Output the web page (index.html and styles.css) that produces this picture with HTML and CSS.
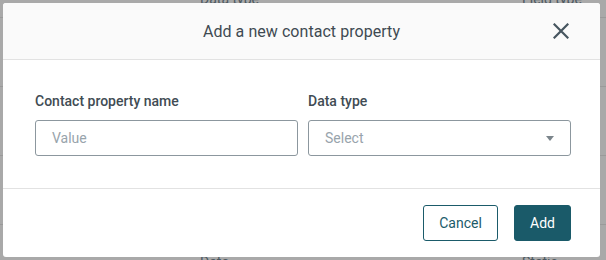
FILE: index.html
```html
<!DOCTYPE html>
<html lang="en">
<head>
<meta charset="utf-8">
<title>Add a new contact property</title>
<link rel="stylesheet" href="styles.css">
</head>
<body>
<div class="page">
  <div class="bg-table">
    <div class="bg-row bg-row-top"><span class="bg-c1">Data type</span><span class="bg-c2">Field type</span></div>
    <div class="bg-row"></div>
    <div class="bg-row"></div>
    <div class="bg-row"></div>
    <div class="bg-row bg-row-last"><span class="bg-c1">Date</span><span class="bg-c2">Static</span></div>
  </div>

  <div class="modal">
    <div class="modal-header">
      <h2 class="modal-title">Add a new contact property</h2>
      <button class="close-btn" aria-label="Close">
        <svg width="16" height="16" viewBox="0 0 16 16"><path d="M1.5 1.5 L14.5 14.5 M14.5 1.5 L1.5 14.5" stroke="#46555f" stroke-width="2.2" stroke-linecap="square" fill="none"/></svg>
      </button>
    </div>
    <div class="modal-body">
      <div class="field">
        <label class="field-label">Contact property name</label>
        <div class="input"><span class="placeholder">Value</span></div>
      </div>
      <div class="field">
        <label class="field-label">Data type</label>
        <div class="input select"><span class="placeholder">Select</span><span class="caret"></span></div>
      </div>
    </div>
    <div class="modal-footer">
      <button class="btn btn-outline">Cancel</button>
      <button class="btn btn-primary">Add</button>
    </div>
  </div>
</div>
</body>
</html>
```
FILE: styles.css
```css
* { box-sizing: border-box; }
html, body { margin: 0; padding: 0; }
body {
  background: #a9a9a9;
  font-family: Roboto, "Liberation Sans", Arial, sans-serif;
  width: 606px;
  height: 260px;
  overflow: hidden;
}
.page { position: relative; width: 606px; height: 260px; overflow: hidden; }

.bg-table { display: flex; flex-direction: column; height: 260px; overflow: hidden; }
.bg-row {
  height: 69px;
  border-bottom: 1px solid #9a9a9a;
  position: relative;
  flex: none;
}
.bg-row-top { height: 18px; }
.bg-row-last { border-bottom: none; height: 35px; }
.bg-row span {
  position: absolute;
  font-size: 14px;
  line-height: 16px;
  color: #4c5860;
}
.bg-row-top span { top: -9px; }
.bg-row-last span { top: 29px; }
.bg-c1 { left: 200px; }
.bg-c2 { left: 522px; }

.modal {
  position: absolute;
  left: 3px;
  top: 3px;
  width: 597px;
  height: 254px;
  background: #fff;
  border-radius: 3px;
  overflow: hidden;
  display: flex;
  flex-direction: column;
}
.modal-header {
  height: 57px;
  background: #fafafa;
  border-bottom: 1px solid #e2e2e2;
  display: flex;
  align-items: center;
  justify-content: center;
  position: relative;
}
.modal-title {
  margin: 0;
  font-size: 16px;
  font-weight: 400;
  color: #3f4a52;
  letter-spacing: 0.05px;
}
.close-btn {
  position: absolute;
  right: 31px;
  top: 20px;
  width: 16px;
  height: 16px;
  padding: 0;
  border: none;
  background: none;
  display: flex;
}
.modal-body {
  display: grid;
  grid-template-columns: 263px 263px;
  column-gap: 10px;
  padding: 33px 29px 32px 32px;
  border-bottom: 1px solid #e2e2e2;
}
.field { display: flex; flex-direction: column; }
.field-label {
  font-size: 14px;
  font-weight: 500;
  line-height: 16px;
  color: #414c54;
  margin-bottom: 11px;
}
.input {
  height: 36px;
  border: 1px solid #8c979e;
  border-radius: 3px;
  display: flex;
  align-items: center;
  padding: 0 16px;
  position: relative;
}
.placeholder {
  font-size: 14px;
  color: #98a4ac;
}
.caret {
  position: absolute;
  right: 16px;
  top: 15px;
  width: 0;
  height: 0;
  border-left: 4.5px solid transparent;
  border-right: 4.5px solid transparent;
  border-top: 5px solid #7b858b;
}
.modal-footer {
  flex: 1;
  display: flex;
  justify-content: flex-end;
  align-items: flex-start;
  gap: 16px;
  padding: 16px 29px 0 0;
}
.btn {
  height: 36px;
  border-radius: 3px;
  font-family: Roboto, "Liberation Sans", Arial, sans-serif;
  font-size: 14px;
  padding: 0;
  cursor: pointer;
}
.btn-outline {
  width: 75px;
  background: #fff;
  border: 1px solid #1b5b6a;
  color: #1b5b6a;
}
.btn-primary {
  width: 57px;
  background: #1a5a69;
  border: 1px solid #1a5a69;
  color: #fff;
}
```
